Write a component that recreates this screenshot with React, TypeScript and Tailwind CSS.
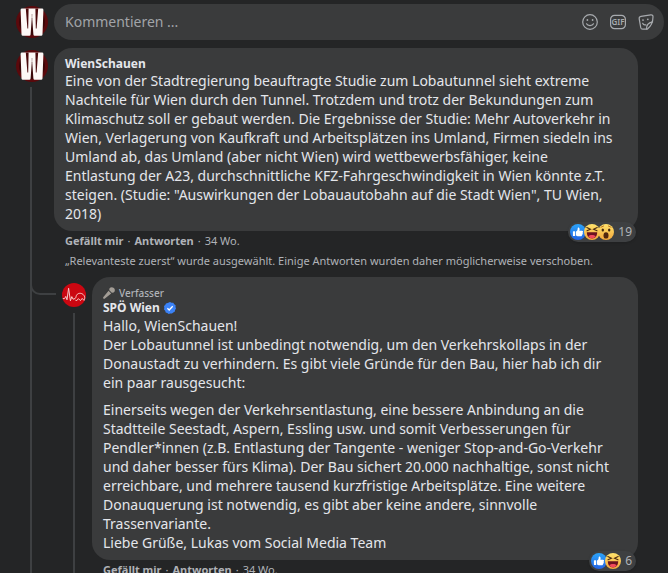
import type { ReactNode } from "react";

type Reaction = "like" | "haha" | "wow";

function WienSchauenAvatar() {
  return (
    <svg viewBox="0 0 32 32" className="size-8 shrink-0" role="img" aria-label="WienSchauen">
      <circle cx="16" cy="16" r="16" fill="#5a090c" />
      <circle cx="16" cy="16" r="13" fill="#3a0708" />
      <path
        d="M4.6 4Q4.5 2.600 6 2.600H26Q27.500 2.600 27.400 4L26.500 28.500Q26.400 29.800 25.200 29.800H18.600Q17.600 29.800 17.400 28.600L16.200 12H15.800L14.600 28.600Q14.400 29.800 13.400 29.800H6.800Q5.600 29.800 5.500 28.500Z"
        fill="#fdf8f6"
      />
      <path d="M9.8 2.400H12.600L12.200 22.500H11.400ZM22.200 2.400H19.400L19.800 22.500H20.600Z" fill="#4a090b" />
      <path d="M15.600 8H16.400L16.200 13H15.800Z" fill="#a08582" />
    </svg>
  );
}

function SpoeAvatar() {
  return (
    <svg viewBox="0 0 24 24" className="size-6 shrink-0" role="img" aria-label="SPÖ Wien">
      <circle cx="12" cy="12" r="12" fill="#cb0711" />
      <path
        d="M.8 15.6H2.6L3.8 13.4 5 16.8 6.600 5.200 8.400 17.800 9.800 13.600 11 16.200 13 15.600C14.400 15 13.600 12.400 15.400 11.200 17.600 9.400 21.200 10.400 22.400 13.200 23 15 22.600 16.600 22 17.400L20.200 15.400 18.400 17.600 16.400 15.600 14.800 17.600 13.400 17.200"
        fill="none"
        stroke="#f7c9c9"
        strokeWidth="1"
        strokeLinejoin="round"
      />
    </svg>
  );
}

function ReactionIcon({ type }: { type: Reaction }) {
  if (type === "like") {
    return (
      <svg viewBox="0 0 16 16" className="size-4">
        <defs>
          <linearGradient id="likeFill" x1="0" y1="0" x2="0" y2="1">
            <stop offset="0" stopColor="#2ba4f9" />
            <stop offset="1" stopColor="#2463e3" />
          </linearGradient>
        </defs>
        <circle cx="8" cy="8" r="8" fill="url(#likeFill)" />
        <path
          d="M3.4 7.2h1.3q.5 0 .5.5v3.8q0 .5-.5.5H3.4q-.5 0-.5-.5V7.7q0-.5.5-.5ZM6 7.600C7.400 6.800 7.700 5.800 7.700 4.200c0-1 1.900-.9 1.900 1 0 .6-.1 1-.3 1.500h2.600c1.300 0 1.500 1.400.7 1.800.5.5.4 1.200-.2 1.500.3.6 0 1.100-.5 1.300.1.7-.3 1-1.100 1H8.200C7.200 12.300 6.800 11.700 6 11.500Z"
          fill="#fff"
        />
      </svg>
    );
  }

  return (
    <svg viewBox="0 0 16 16" className="-ml-0.5 size-4">
      <defs>
        <linearGradient id="faceFill" x1="0" y1="0" x2="0" y2="1">
          <stop offset="0" stopColor="#ffe36c" />
          <stop offset="1" stopColor="#f3a63b" />
        </linearGradient>
      </defs>
      <circle cx="8" cy="8" r="8" fill="url(#faceFill)" />
      {type === "haha" ? (
        <>
          <path
            d="M2.8 3.600 6.400 5.200 3 6.700M13.200 3.600 9.600 5.200 13 6.700"
            fill="none"
            stroke="#4b2c12"
            strokeWidth="1.1"
            strokeLinecap="round"
          />
          <path d="M2.8 8.200H13.200C13.200 12 11.200 14.400 8 14.400S2.800 12 2.800 8.200Z" fill="#6b1320" />
          <path d="M4.3 12.300C6 10.600 10 10.600 11.700 12.300 10.800 13.700 9.600 14.400 8 14.400S5.200 13.700 4.300 12.300Z" fill="#f04a5b" />
        </>
      ) : (
        <>
          <path
            d="M3 3.200 5.600 2M10.400 2 13 3.200"
            stroke="#b8671a"
            strokeWidth="0.9"
            strokeLinecap="round"
          />
          <ellipse cx="4.8" cy="6" rx="1.2" ry="1.5" fill="#42280f" />
          <ellipse cx="11.2" cy="6" rx="1.2" ry="1.5" fill="#42280f" />
          <ellipse cx="8" cy="11.4" rx="2.5" ry="3.2" fill="#51260e" />
        </>
      )}
    </svg>
  );
}

function Reactions({ types, count }: { types: Reaction[]; count: number }) {
  return (
    <button
      type="button"
      className="absolute right-0.5 -bottom-[11px] flex h-5 items-center rounded-full bg-[#3e4042] pr-1 pl-0.5 text-xs text-[#b0b3b8] shadow"
    >
      {types.map((type) => (
        <ReactionIcon key={type} type={type} />
      ))}
      <span className="pl-1">{count}</span>
    </button>
  );
}

function Bubble({ children }: { children: ReactNode }) {
  return <div className="relative rounded-[18px] bg-[#3a3b3c] px-[11px] pt-[9px] pb-2">{children}</div>;
}

function CommentActions() {
  return (
    <div className="flex h-5 shrink-0 items-center gap-1 px-[11px] text-[11px] text-[#b0b3b8]">
      <button type="button" className="font-bold">Gefällt mir</button>
      <span>·</span>
      <button type="button" className="font-bold">Antworten</button>
      <span>·</span>
      <a href="#">34 Wo.</a>
    </div>
  );
}

function CommentBox() {
  return (
    <form className="flex items-center gap-1.5 pr-1 pl-4">
      <WienSchauenAvatar />
      <div className="flex h-9 min-w-0 flex-1 items-center rounded-full bg-[#3a3b3c] pr-[10px] pl-[11px]">
        <input
          type="text"
          aria-label="Kommentieren"
          placeholder="Kommentieren ..."
          className="min-w-0 flex-1 bg-transparent text-sm outline-none placeholder:text-[#a1a4a8]"
        />
        <div className="flex gap-3 text-[#a8abaf]">
          <button type="button" aria-label="Emoji einfügen">
            <svg viewBox="0 0 16 16" className="size-4" fill="none" stroke="currentColor" strokeWidth="1.2">
              <circle cx="8" cy="8" r="7.3" />
              <path d="M4.5 9.800C5.700 12.200 10.300 12.200 11.500 9.800" strokeLinecap="round" />
              <circle cx="5.4" cy="6" r="0.9" fill="currentColor" stroke="none" />
              <circle cx="10.6" cy="6" r="0.9" fill="currentColor" stroke="none" />
            </svg>
          </button>
          <button type="button" aria-label="GIF einfügen">
            <svg viewBox="0 0 16 16" className="size-4" fill="none" stroke="currentColor" strokeWidth="1.2">
              <rect x="0.6" y="1.3" width="14.8" height="13.4" rx="4" />
              <text
                x="8"
                y="11"
                textAnchor="middle"
                fill="currentColor"
                stroke="none"
                fontSize="8"
                fontWeight="600"
              >
                GIF
              </text>
            </svg>
          </button>
          <button type="button" aria-label="Sticker einfügen">
            <svg viewBox="0 0 16 16" className="size-4" fill="none" stroke="currentColor" strokeWidth="1.2">
              <path
                d="M3 2.300 12.800.8Q15 .6 15 2.700C15 8.500 13.700 11.800 9.200 15.200H4.700Q3 15.200 2.700 13.500L1.200 4.800Q.9 2.700 3 2.300Z"
                strokeLinejoin="round"
              />
              <path
                d="M8.600 15C8.200 11.500 10.200 8.800 14.600 7.800M4.700 9.300C5.200 10.800 6.500 11.200 7.900 10.800"
                strokeLinecap="round"
              />
              <circle cx="5" cy="6.1" r="0.9" fill="currentColor" stroke="none" />
              <circle cx="9.8" cy="5.3" r="0.9" fill="currentColor" stroke="none" />
            </svg>
          </button>
        </div>
      </div>
    </form>
  );
}

const commentText = `Eine von der Stadtregierung beauftragte Studie zum Lobautunnel sieht extreme
Nachteile für Wien durch den Tunnel. Trotzdem und trotz der Bekundungen zum
Klimaschutz soll er gebaut werden. Die Ergebnisse der Studie: Mehr Autoverkehr in
Wien, Verlagerung von Kaufkraft und Arbeitsplätzen ins Umland, Firmen siedeln ins
Umland ab, das Umland (aber nicht Wien) wird wettbewerbsfähiger, keine
Entlastung der A23, durchschnittliche KFZ-Fahrgeschwindigkeit in Wien könnte z.T.
steigen. (Studie: "Auswirkungen der Lobauautobahn auf die Stadt Wien", TU Wien,
2018)`;

const replyParagraphs = [
  `Hallo, WienSchauen!
Der Lobautunnel ist unbedingt notwendig, um den Verkehrskollaps in der
Donaustadt zu verhindern. Es gibt viele Gründe für den Bau, hier hab ich dir
ein paar rausgesucht:`,
  `Einerseits wegen der Verkehrsentlastung, eine bessere Anbindung an die
Stadtteile Seestadt, Aspern, Essling usw. und somit Verbesserungen für
Pendler*innen (z.B. Entlastung der Tangente - weniger Stop-and-Go-Verkehr
und daher besser fürs Klima). Der Bau sichert 20.000 nachhaltige, sonst nicht
erreichbare, und mehrere tausend kurzfristige Arbeitsplätze. Eine weitere
Donauquerung ist notwendig, es gibt aber keine andere, sinnvolle
Trassenvariante.
Liebe Grüße, Lukas vom Social Media Team`,
];

function Reply() {
  return (
    <article className="-ml-6 flex flex-1 gap-1.5">
      {/* elbow that joins the reply to the parent thread line */}
      <div className="h-[18px] w-[26px] shrink-0 rounded-bl-[10px] border-b-2 border-l-2 border-[#3e4042]" />
      <div className="flex w-6 shrink-0 flex-col items-center gap-1.5 pt-1.5">
        <SpoeAvatar />
        <div className="w-0.5 flex-1 bg-[#3e4042]" />
      </div>
      <div className="min-w-0 flex-1">
        <Bubble>
          <div className="flex h-[14px] items-center gap-1 text-[10px] font-medium text-[#b0b3b8]">
            <svg viewBox="0 0 12 12" className="size-3" fill="#a39d96">
              <path d="M5.600 3.800 8.200 6.400 1.900 11.600Q1 12.200.4 11.600T.4 10.100Z" />
              <path d="M6.300 3.200Q6 1.300 7.500.5 9.200-.4 10.900 1.100 12.400 2.800 11.500 4.500 10.700 6 8.800 5.700Z" />
            </svg>
            Verfasser
          </div>
          <div className="flex h-4 items-center gap-1 text-xs font-bold">
            <a href="#">SPÖ Wien</a>
            <svg viewBox="0 0 12 12" className="size-3" role="img" aria-label="Verifiziert">
              <path
                d="M6 0 7.600.7 9.300.8 10.200 2.300 11.600 3.300 11.500 5 12 6.600 11.100 8 10.700 9.700 9.200 10.400 8 11.600 6.300 11.400 4.700 12 3.300 11 1.700 10.400 1.200 8.800 0 7.500.3 5.800 0 4.100 1.200 2.900 2 1.400 3.700 1.100Z"
                fill="#3b82f6"
              />
              <path d="M3.4 6.200 5.200 8 8.700 4.200" fill="none" stroke="#fff" strokeWidth="1.3" />
            </svg>
          </div>
          <div className="flex flex-col gap-2 text-sm leading-[19px] whitespace-pre-line">
            {replyParagraphs.map((text) => (
              <p key={text}>{text}</p>
            ))}
          </div>
          <Reactions types={["like", "haha"]} count={6} />
        </Bubble>
        <CommentActions />
      </div>
    </article>
  );
}

export default function App() {
  return (
    <main className="flex h-screen flex-col gap-2 overflow-hidden bg-[#242526] pt-1 font-['Noto_Sans',sans-serif] text-[#e4e6eb]">
      <CommentBox />
      <article className="flex min-h-0 flex-1 gap-1.5 pr-[30px] pl-4">
        <div className="flex w-8 shrink-0 flex-col gap-[5px] pt-0.5">
          <WienSchauenAvatar />
          <div className="ml-3.5 w-0.5 flex-1 bg-[#3e4042]" />
        </div>
        <div className="flex min-w-0 flex-1 flex-col">
          <Bubble>
            <a href="#" className="block text-xs leading-[14px] font-bold">WienSchauen</a>
            <p className="text-sm leading-[19px] whitespace-pre-line">{commentText}</p>
            <Reactions types={["like", "haha", "wow"]} count={19} />
          </Bubble>
          <CommentActions />
          <p className="mb-1.5 px-[11px] text-[11px] leading-5 text-[#b0b3b8]">
            „Relevanteste zuerst“ wurde ausgewählt. Einige Antworten wurden daher möglicherweise verschoben.
          </p>
          <Reply />
        </div>
      </article>
    </main>
  );
}
